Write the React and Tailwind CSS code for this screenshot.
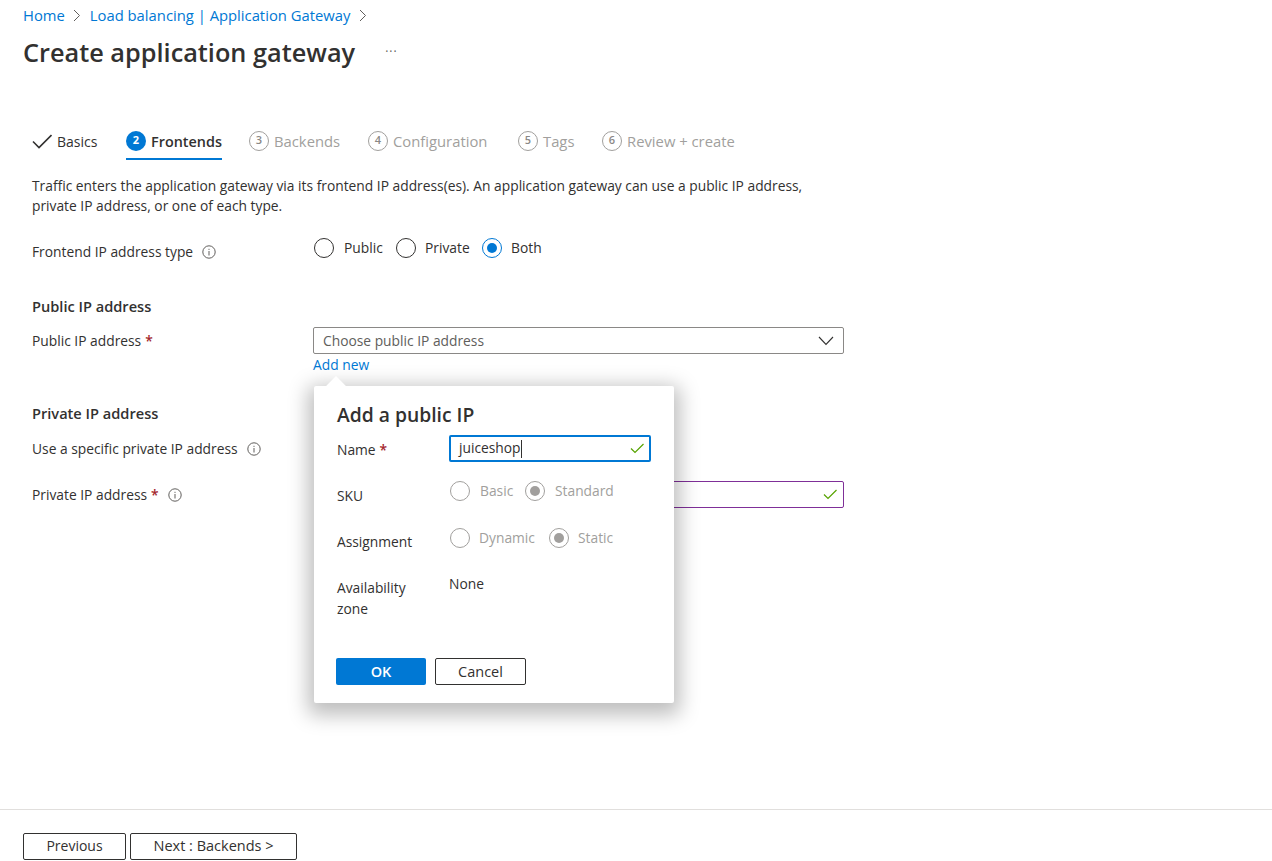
import React from "react";

const FONT = "font-['Open_Sans','Noto_Sans',sans-serif]";

function InfoIcon() {
  return (
    <svg width="14" height="14" viewBox="0 0 14 14" fill="none" className="shrink-0">
      <circle cx="7" cy="7" r="6.2" stroke="#605e5c" strokeWidth="1" />
      <rect x="6.5" y="6" width="1" height="4.5" fill="#605e5c" />
      <rect x="6.5" y="3.8" width="1" height="1.1" fill="#605e5c" />
    </svg>
  );
}

function Crumb({ className }) {
  return (
    <svg width="8" height="13" viewBox="0 0 8 13" fill="none" className={className}>
      <path d="M1 1 L6.5 6.5 L1 12" stroke="#605e5c" strokeWidth="1" />
    </svg>
  );
}

function ValidCheck() {
  return (
    <svg width="14" height="11" viewBox="0 0 14 11" fill="none">
      <path d="M1 5.5 L5 9.5 L13.5 1" stroke="#57a300" strokeWidth="1.2" />
    </svg>
  );
}

function Required() {
  return <span className="text-[#a4262c] font-semibold ml-[4px]">*</span>;
}

function StepTab({ num, label, state, className }) {
  const active = state === "active";
  return (
    <div className={`relative flex items-center h-[37px] ${className}`}>
      {state === "done" && (
        <svg width="20" height="16" viewBox="0 0 20 16" fill="none" className="mr-[5px] -mt-[2px]">
          <path d="M1 8.5 L7 14.5 L19.5 2" stroke="#323130" strokeWidth="1.6" />
        </svg>
      )}
      {active && (
        <span className="w-[20px] h-[20px] rounded-full bg-[#0078d4] text-white text-[11px] font-bold flex items-center justify-center mr-[5px] -mt-[2px]">
          {num}
        </span>
      )}
      {state === "todo" && (
        <span className="w-[20px] h-[20px] rounded-full border border-[#a19f9d] text-[#8a8886] text-[11px] font-semibold flex items-center justify-center mr-[5px] -mt-[2px]">
          {num}
        </span>
      )}
      <span className={state === "todo" ? "text-[#a19f9d]" : active ? "text-[#323130] font-semibold text-[14.4px]" : "text-[#323130] text-[14px]"}>
        {label}
      </span>
      {active && <div className="absolute left-0 right-0 bottom-0 h-[2px] bg-[#0078d4]" />}
    </div>
  );
}

function Radio({ label, checked, disabled, tight, className }) {
  const ring = disabled ? "border-[#a19f9d]" : checked ? "border-[#0078d4]" : "border-[#323130]";
  const dot = disabled ? "bg-[#a19f9d]" : "bg-[#0078d4]";
  return (
    <div className={`flex items-center ${className}`}>
      <span className={`w-[20px] h-[20px] rounded-full border ${ring} flex items-center justify-center shrink-0`}>
        {checked && <span className={`w-[10px] h-[10px] rounded-full ${dot}`} />}
      </span>
      <span className={`${tight ? "ml-[9px]" : "ml-[10px]"} ${disabled ? "text-[#a19f9d]" : "text-[#323130]"}`}>{label}</span>
    </div>
  );
}

function PopRow({ label, children, className }) {
  return (
    <div className={`flex ${className}`}>
      <div className="w-[112px] shrink-0 leading-[21px]">{label}</div>
      {children}
    </div>
  );
}

export default function App() {
  return (
    <div className={`${FONT} relative h-[861px] w-[1272px] overflow-hidden bg-white text-[13.8px] text-[#323130] flex flex-col`}>
      {/* Breadcrumb */}
      <div className="flex items-center h-[20px] mt-[5px] ml-[23px] text-[#0078d4] text-[14.8px]">
        <span>Home</span>
        <Crumb className="ml-[8px] mr-[9px]" />
        <span>Load balancing | Application Gateway</span>
        <Crumb className="ml-[9px]" />
      </div>

      {/* Title */}
      <div className="flex items-center h-[36px] mt-[9px] ml-[23px]">
        <h1 className="text-[25.3px] font-semibold text-[#323130] leading-[36px]">Create application gateway</h1>
        <span className="ml-[30px] text-[#605e5c] text-[12px] tracking-[1px]">···</span>
      </div>

      {/* Steps */}
      <div className="flex mt-[53px] ml-[32px] text-[14.8px]">
        <StepTab label="Basics" state="done" className="w-[94px]" />
        <StepTab num="2" label="Frontends" state="active" className="w-[96px]" />
        <StepTab num="3" label="Backends" state="todo" className="ml-[27px] w-[119px]" />
        <StepTab num="4" label="Configuration" state="todo" className="w-[150px]" />
        <StepTab num="5" label="Tags" state="todo" className="w-[84px]" />
        <StepTab num="6" label="Review + create" state="todo" />
      </div>

      {/* Intro */}
      <p className="mt-[16px] ml-[32px] w-[790px] leading-[20px]">
        Traffic enters the application gateway via its frontend IP address(es). An application gateway can use a public IP address, private IP address, or one of each type.
      </p>

      {/* Frontend type */}
      <div className="flex mt-[22px] ml-[32px] h-[24px]">
        <div className="w-[282px] flex items-center gap-[9px] mt-[4px] h-[20px]">
          Frontend IP address type <InfoIcon />
        </div>
        <div className="flex items-center h-[20px]">
          <Radio label="Public" className="w-[82px]" />
          <Radio label="Private" tight className="w-[86px]" />
          <Radio label="Both" checked tight />
        </div>
      </div>

      {/* Public IP */}
      <h2 className="mt-[34px] ml-[32px] font-semibold text-[14.6px] leading-[20px]">Public IP address</h2>
      <div className="flex mt-[11px] ml-[32px]">
        <div className="w-[281px] h-[27px] flex items-center pt-[2px]">
          Public IP address<Required />
        </div>
        <div className="w-[531px]">
          <div className="h-[27px] border border-[#8a8886] rounded-[2px] flex items-center justify-between pl-[9px] pr-[9px] pt-[1px] text-[#605e5c]">
            Choose public IP address
            <svg width="16" height="10" viewBox="0 0 16 10" fill="none" className="-mt-[1px]">
              <path d="M1 1 L8 8.5 L15 1" stroke="#323130" strokeWidth="1.1" />
            </svg>
          </div>
          <div className="text-[#0078d4] leading-[20px] mt-[1px]">Add new</div>
        </div>
      </div>

      {/* Private IP */}
      <h2 className="mt-[28px] ml-[32px] font-semibold text-[14.6px] leading-[20px]">Private IP address</h2>
      <div className="flex items-center gap-[9px] mt-[16px] ml-[32px] h-[20px]">
        Use a specific private IP address <InfoIcon />
      </div>
      <div className="flex mt-[22px] ml-[32px]">
        <div className="w-[282px] h-[27px] flex items-center pt-[1px]">
          Private IP address<Required />
          <span className="ml-[9px]"><InfoIcon /></span>
        </div>
        <div className="w-[530px] h-[27px] border border-[#7f2f98] rounded-[2px] flex items-center justify-end pr-[6px]">
          <ValidCheck />
        </div>
      </div>

      {/* Footer */}
      <div className="mt-auto border-t border-[#e1dfdd] h-[52px] pt-[23px] pl-[23px] flex gap-[4px]">
        <button className="w-[103px] h-[27px] border border-[#323130] rounded-[2px] text-center text-[14px] pb-[2px]">Previous</button>
        <button className="w-[167px] h-[27px] border border-[#323130] rounded-[2px] text-center text-[14.5px] pb-[1px]">Next : Backends &gt;</button>
      </div>

      {/* Add a public IP callout */}
      <div className="absolute left-[314px] top-[386px] w-[360px] h-[317px] bg-white rounded-[2px] shadow-[0_6px_20px_6px_rgba(0,0,0,0.26)] pl-[23px] pr-[23px]">
        <div className="absolute left-[15px] -top-[7px] w-[14px] h-[14px] rotate-45 bg-white" />
        <div className="relative text-[19.3px] font-semibold leading-[24px] mt-[17px]">Add a public IP</div>
        <PopRow className="mt-[8px]" label={<span className="block mt-[4px]">Name<Required /></span>}>
          <div className="w-[202px] h-[27px] border-2 border-[#0078d4] rounded-[2px] flex items-center justify-between pl-[8px] pr-[5px] relative">
            <span className="flex items-center">juiceshop<span className="w-px h-[18px] bg-[#323130]" /></span>
            <ValidCheck />
          </div>
        </PopRow>
        <PopRow className="mt-[19px]" label={<span className="block mt-[4px]">SKU</span>}>
          <div className="flex items-center h-[20px] ml-[1px]">
            <Radio label="Basic" disabled className="w-[75px]" />
            <Radio label="Standard" checked disabled />
          </div>
        </PopRow>
        <PopRow className="mt-[22px]" label={<span className="block mt-[3px]">Assignment</span>}>
          <div className="flex items-center h-[20px] ml-[1px]">
            <Radio label="Dynamic" disabled tight className="w-[99px]" />
            <Radio label="Static" checked disabled tight />
          </div>
        </PopRow>
        <PopRow className="mt-[25px]" label={<span className="block">Availability<br />zone</span>}>
          <div className="leading-[20px] -mt-[3px]">None</div>
        </PopRow>
        <div className="flex gap-[9px] mt-[39px] -ml-px text-[14.5px]">
          <button className="w-[90px] h-[27px] bg-[#0078d4] text-white font-semibold rounded-[2px]">OK</button>
          <button className="w-[91px] h-[27px] border border-[#323130] rounded-[2px]">Cancel</button>
        </div>
      </div>
    </div>
  );
}
